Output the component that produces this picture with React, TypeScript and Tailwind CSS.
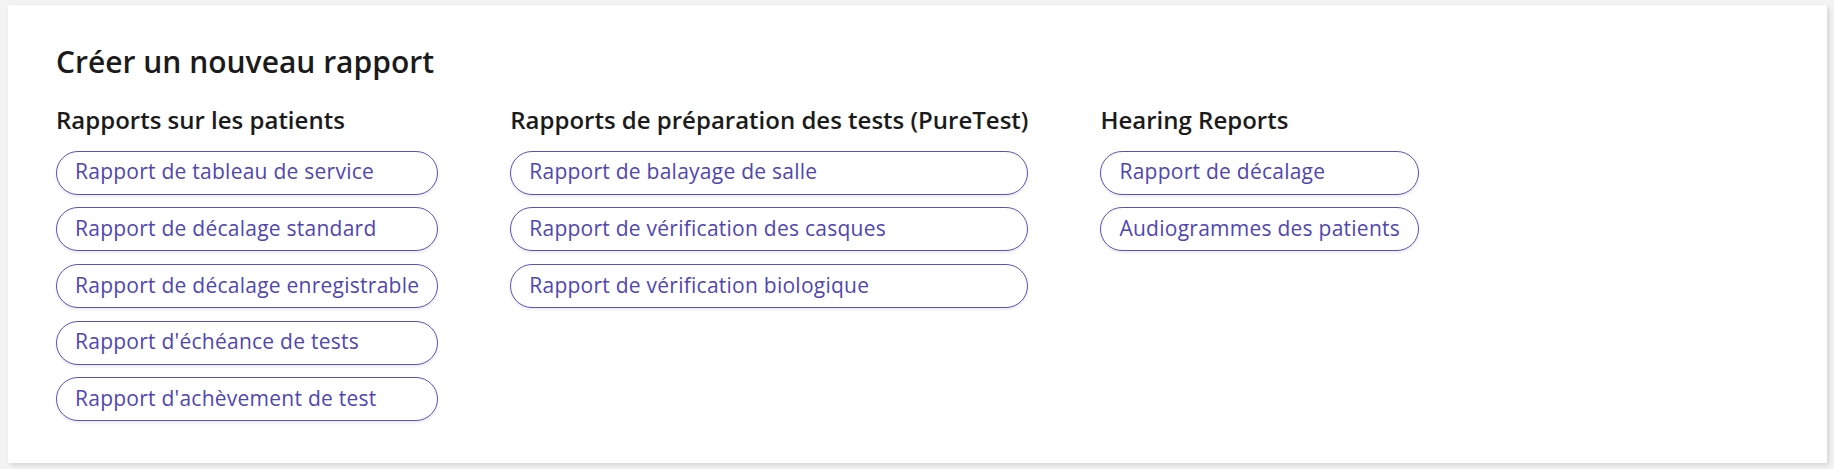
import React from "react";

const columns: { title: string; items: string[] }[] = [
  {
    title: "Rapports sur les patients",
    items: [
      "Rapport de tableau de service",
      "Rapport de décalage standard",
      "Rapport de décalage enregistrable",
      "Rapport d'échéance de tests",
      "Rapport d'achèvement de test",
    ],
  },
  {
    title: "Rapports de préparation des tests (PureTest)",
    items: [
      "Rapport de balayage de salle",
      "Rapport de vérification des casques",
      "Rapport de vérification biologique",
    ],
  },
  {
    title: "Hearing Reports",
    items: ["Rapport de décalage", "Audiogrammes des patients"],
  },
];

export default function App() {
  return (
    <div
      className="w-[1834px] h-[469px] bg-[#f3f3f3] pt-[5px] pl-[8px] pr-[7px] pb-[6px]"
      style={{ fontFamily: '"Open Sans", "Noto Sans", sans-serif' }}
    >
      <div className="h-full bg-white shadow-[2px_2px_5px_rgba(0,0,0,0.13)] pt-[37px] px-12 pb-[41px]">
        <h1 className="text-[30px] leading-[40px] font-semibold text-[#1b1b1b]">
          Créer un nouveau rapport
        </h1>
        <div className="flex gap-[72px] mt-[22px] items-start">
          {columns.map((col) => (
            <div key={col.title} className="flex flex-col w-max">
              <h2 className="text-[24px] leading-[32px] font-semibold text-[#1b1b1b] whitespace-nowrap mb-[14.5px]">
                {col.title}
              </h2>
              <div className="flex flex-col gap-[12.7px]">
                {col.items.map((it) => (
                  <button
                    key={it}
                    className="w-full h-[44px] flex items-center pb-[1px] px-[18px] rounded-full border border-[#5a50c0] bg-white text-[#4f46b4] text-[21px] tracking-[0.25px] whitespace-nowrap text-left shadow-[0_2px_3px_rgba(0,0,0,0.08)]"
                  >
                    {it}
                  </button>
                ))}
              </div>
            </div>
          ))}
        </div>
      </div>
    </div>
  );
}
